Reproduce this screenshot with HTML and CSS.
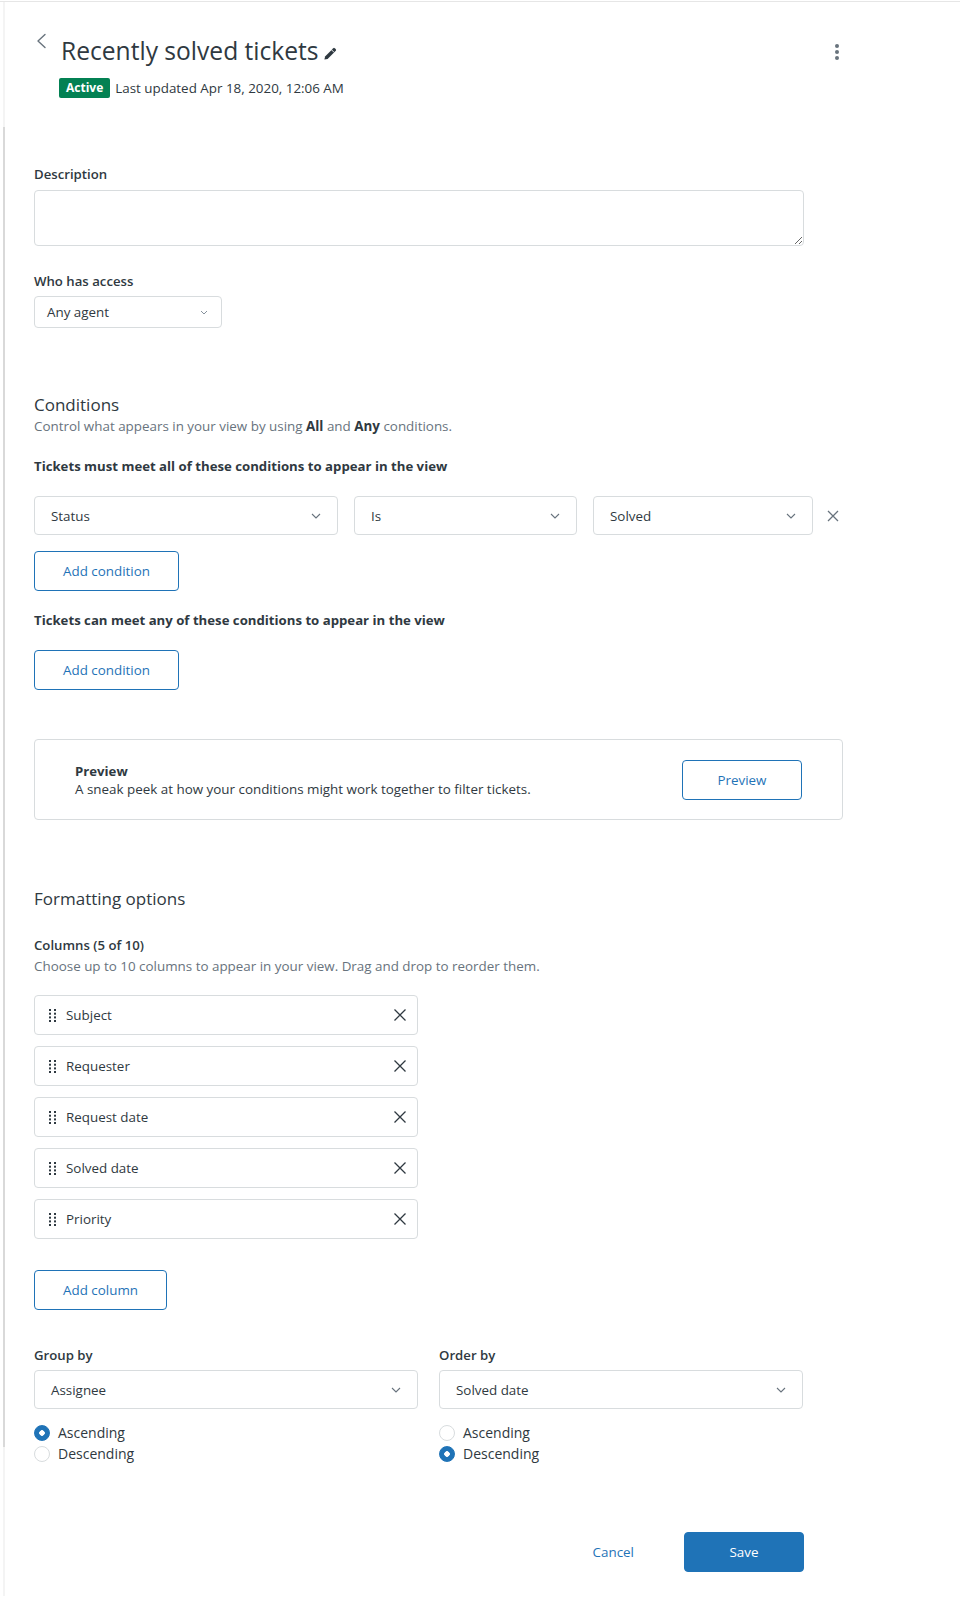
FILE: index.html
```html
<!DOCTYPE html>
<html lang="en">
<head>
<meta charset="utf-8">
<title>Recently solved tickets</title>
<link rel="stylesheet" href="styles.css">
</head>
<body>
<div class="app">
  <div class="rail"><div class="rail-line"></div></div>
  <main class="main">
    <header class="head">
      <button class="back" type="button" aria-label="Back">
        <svg width="12" height="16" viewBox="0 0 12 16"><path d="M9 1.5 2 8l7 6.5" fill="none" stroke="#68737d" stroke-width="1.4" stroke-linecap="round" stroke-linejoin="round"/></svg>
      </button>
      <div class="head-text">
        <h1 class="title">Recently solved tickets<svg class="pencil" width="14" height="14" viewBox="0 0 14 14"><path d="M10.3 1.2a1 1 0 0 1 1.4 0l1.1 1.1a1 1 0 0 1 0 1.4L4.6 11.9 1.4 12.6l.7-3.2z" fill="#2f3941"/><path d="M8.6 2.9l2.5 2.5" stroke="#fff" stroke-width="0.9"/></svg></h1>
        <div class="meta"><span class="badge">Active</span><span class="updated">Last updated Apr 18, 2020, 12:06 AM</span></div>
      </div>
      <button class="kebab" type="button" aria-label="More options">
        <svg width="6" height="18" viewBox="0 0 6 18"><circle cx="3" cy="3" r="2" fill="#68737d"/><circle cx="3" cy="9" r="2" fill="#68737d"/><circle cx="3" cy="15" r="2" fill="#68737d"/></svg>
      </button>
    </header>

    <form class="form">
      <label class="label label--desc" for="desc">Description</label>
      <textarea id="desc" class="textarea"></textarea>

      <label class="label label--access">Who has access</label>
      <div class="select select--sm"><span>Any agent</span>
        <svg width="8" height="5" viewBox="0 0 8 5"><path d="M1 1l3 3 3-3" fill="none" stroke="#87929d" stroke-width="1"/></svg>
      </div>

      <h2 class="section-title section-title--conditions">Conditions</h2>
      <p class="hint">Control what appears in your view by using <b>All</b> and <b>Any</b> conditions.</p>

      <h3 class="group-title group-title--all">Tickets must meet all of these conditions to appear in the view</h3>
      <div class="cond-row">
        <div class="select select--status"><span>Status</span><svg width="10" height="6" viewBox="0 0 10 6"><path d="M1 1l4 4 4-4" fill="none" stroke="#68737d" stroke-width="1.1"/></svg></div>
        <div class="select select--op"><span>Is</span><svg width="10" height="6" viewBox="0 0 10 6"><path d="M1 1l4 4 4-4" fill="none" stroke="#68737d" stroke-width="1.1"/></svg></div>
        <div class="select select--val"><span>Solved</span><svg width="10" height="6" viewBox="0 0 10 6"><path d="M1 1l4 4 4-4" fill="none" stroke="#68737d" stroke-width="1.1"/></svg></div>
        <button class="icon-btn" type="button" aria-label="Remove condition"><svg width="12" height="12" viewBox="0 0 12 12"><path d="M1 1l10 10M11 1 1 11" stroke="#68737d" stroke-width="1.3"/></svg></button>
      </div>
      <button class="btn btn--outline btn--cond1" type="button">Add condition</button>

      <h3 class="group-title group-title--any">Tickets can meet any of these conditions to appear in the view</h3>
      <button class="btn btn--outline btn--cond2" type="button">Add condition</button>

      <div class="preview">
        <div class="preview-text">
          <div class="preview-title">Preview</div>
          <div class="preview-desc">A sneak peek at how your conditions might work together to filter tickets.</div>
        </div>
        <button class="btn btn--outline" type="button">Preview</button>
      </div>

      <h2 class="section-title section-title--format">Formatting options</h2>
      <div class="label label--cols">Columns (5 of 10)</div>
      <p class="hint hint--cols">Choose up to 10 columns to appear in your view. Drag and drop to reorder them.</p>

      <ul class="col-list">
        <li class="col-item"><svg class="grip" width="7" height="13" viewBox="0 0 7 13"><g fill="#2f3941"><rect x="0" y="0" width="2" height="2"/><rect x="5" y="0" width="2" height="2"/><rect x="0" y="3.7" width="2" height="2"/><rect x="5" y="3.7" width="2" height="2"/><rect x="0" y="7.4" width="2" height="2"/><rect x="5" y="7.4" width="2" height="2"/><rect x="0" y="11" width="2" height="2"/><rect x="5" y="11" width="2" height="2"/></g></svg><span class="col-name">Subject</span><svg class="x" width="12" height="12" viewBox="0 0 12 12"><path d="M.5.5l11 11M11.5.5l-11 11" stroke="#2f3941" stroke-width="1.3"/></svg></li>
        <li class="col-item"><svg class="grip" width="7" height="13" viewBox="0 0 7 13"><g fill="#2f3941"><rect x="0" y="0" width="2" height="2"/><rect x="5" y="0" width="2" height="2"/><rect x="0" y="3.7" width="2" height="2"/><rect x="5" y="3.7" width="2" height="2"/><rect x="0" y="7.4" width="2" height="2"/><rect x="5" y="7.4" width="2" height="2"/><rect x="0" y="11" width="2" height="2"/><rect x="5" y="11" width="2" height="2"/></g></svg><span class="col-name">Requester</span><svg class="x" width="12" height="12" viewBox="0 0 12 12"><path d="M.5.5l11 11M11.5.5l-11 11" stroke="#2f3941" stroke-width="1.3"/></svg></li>
        <li class="col-item"><svg class="grip" width="7" height="13" viewBox="0 0 7 13"><g fill="#2f3941"><rect x="0" y="0" width="2" height="2"/><rect x="5" y="0" width="2" height="2"/><rect x="0" y="3.7" width="2" height="2"/><rect x="5" y="3.7" width="2" height="2"/><rect x="0" y="7.4" width="2" height="2"/><rect x="5" y="7.4" width="2" height="2"/><rect x="0" y="11" width="2" height="2"/><rect x="5" y="11" width="2" height="2"/></g></svg><span class="col-name">Request date</span><svg class="x" width="12" height="12" viewBox="0 0 12 12"><path d="M.5.5l11 11M11.5.5l-11 11" stroke="#2f3941" stroke-width="1.3"/></svg></li>
        <li class="col-item"><svg class="grip" width="7" height="13" viewBox="0 0 7 13"><g fill="#2f3941"><rect x="0" y="0" width="2" height="2"/><rect x="5" y="0" width="2" height="2"/><rect x="0" y="3.7" width="2" height="2"/><rect x="5" y="3.7" width="2" height="2"/><rect x="0" y="7.4" width="2" height="2"/><rect x="5" y="7.4" width="2" height="2"/><rect x="0" y="11" width="2" height="2"/><rect x="5" y="11" width="2" height="2"/></g></svg><span class="col-name">Solved date</span><svg class="x" width="12" height="12" viewBox="0 0 12 12"><path d="M.5.5l11 11M11.5.5l-11 11" stroke="#2f3941" stroke-width="1.3"/></svg></li>
        <li class="col-item"><svg class="grip" width="7" height="13" viewBox="0 0 7 13"><g fill="#2f3941"><rect x="0" y="0" width="2" height="2"/><rect x="5" y="0" width="2" height="2"/><rect x="0" y="3.7" width="2" height="2"/><rect x="5" y="3.7" width="2" height="2"/><rect x="0" y="7.4" width="2" height="2"/><rect x="5" y="7.4" width="2" height="2"/><rect x="0" y="11" width="2" height="2"/><rect x="5" y="11" width="2" height="2"/></g></svg><span class="col-name">Priority</span><svg class="x" width="12" height="12" viewBox="0 0 12 12"><path d="M.5.5l11 11M11.5.5l-11 11" stroke="#2f3941" stroke-width="1.3"/></svg></li>
      </ul>
      <button class="btn btn--outline btn--addcol" type="button">Add column</button>

      <div class="sort-grid">
        <div class="sort-col">
          <div class="label label--sort">Group by</div>
          <div class="select select--sort"><span>Assignee</span><svg width="10" height="6" viewBox="0 0 10 6"><path d="M1 1l4 4 4-4" fill="none" stroke="#68737d" stroke-width="1.1"/></svg></div>
          <div class="radios">
            <label class="radio"><input type="radio" name="group" checked><span>Ascending</span></label>
            <label class="radio"><input type="radio" name="group"><span>Descending</span></label>
          </div>
        </div>
        <div class="sort-col">
          <div class="label label--sort">Order by</div>
          <div class="select select--sort"><span>Solved date</span><svg width="10" height="6" viewBox="0 0 10 6"><path d="M1 1l4 4 4-4" fill="none" stroke="#68737d" stroke-width="1.1"/></svg></div>
          <div class="radios">
            <label class="radio"><input type="radio" name="order"><span>Ascending</span></label>
            <label class="radio"><input type="radio" name="order" checked><span>Descending</span></label>
          </div>
        </div>
      </div>

      <div class="footer">
        <button class="btn btn--link" type="button">Cancel</button>
        <button class="btn btn--primary" type="button">Save</button>
      </div>
    </form>
  </main>
</div>
</body>
</html>
```

FILE: styles.css
```css
* { box-sizing: border-box; }

html, body {
  margin: 0;
  padding: 0;
  background: #fff;
}

body {
  font-family: "Open Sans", "Noto Sans", sans-serif;
  font-size: 13.4px;
  line-height: 20px;
  color: #2f3941;
}

.app {
  display: flex;
  margin-top: 1px;
  border-top: 1px solid #e6e6e6;
  min-height: 1595px;
}

.rail {
  width: 2px;
  margin-left: 3px;
  background: #f4f4f4;
  display: flex;
  flex-direction: column;
}

.rail-line {
  margin-top: 125px;
  height: 1320px;
  background: #d9d9d9;
}

.main {
  width: 838px;
  padding-left: 29px;
}

/* Header */
.head {
  display: flex;
  align-items: flex-start;
  padding-top: 32px;
  padding-left: 2px;
}

.back {
  border: 0;
  background: none;
  padding: 0;
  width: 25px;
  height: 16px;
  margin-top: -1px;
  display: flex;
  cursor: pointer;
}

.head-text {
  flex: 1;
  margin-top: 1px;
}

.title {
  margin: 0;
  font-size: 24.6px;
  line-height: 32px;
  font-weight: 400;
  color: #2f3941;
}

.pencil {
  margin-left: 4px;
  vertical-align: -1px;
}

.meta {
  display: flex;
  align-items: center;
  margin-top: 11px;
  margin-left: -2px;
  height: 20px;
}

.badge {
  background: #038153;
  color: #fff;
  font-size: 12px;
  font-weight: 700;
  line-height: 20px;
  height: 20px;
  padding: 0 7px;
  border-radius: 2px;
}

.updated {
  margin-left: 5px;
  color: #2f3941;
}

.kebab {
  border: 0;
  background: none;
  padding: 0;
  width: 6px;
  margin-top: 9px;
  margin-right: 3px;
  display: flex;
}

/* Form */
.form {
  display: flex;
  flex-direction: column;
  align-items: flex-start;
  margin-top: 66px;
}

.label {
  display: block;
  font-size: 13.2px;
  font-weight: 600;
  line-height: 20px;
  color: #2f3941;
}

.textarea {
  margin-top: 6px;
  width: 770px;
  height: 56px;
  border: 1px solid #d8dcde;
  border-radius: 4px;
  font: inherit;
  resize: vertical;
}

.label--access { margin-top: 25px; }

.select {
  display: flex;
  align-items: center;
  justify-content: space-between;
  border: 1px solid #d8dcde;
  border-radius: 4px;
  background: #fff;
  height: 39px;
  padding: 0 16px;
  color: #2f3941;
}

.select--sm {
  margin-top: 5px;
  width: 188px;
  height: 32px;
  padding: 0 13px 0 12px;
}

.section-title {
  margin: 0;
  font-size: 17px;
  font-weight: 400;
  color: #2f3941;
}

.section-title--conditions {
  margin-top: 66px;
  line-height: 22px;
}

.hint {
  margin: 0;
  color: #68737d;
}

.hint b { color: #2f3941; font-weight: 700; }

.group-title {
  margin: 0;
  font-size: 13.2px;
  line-height: 20px;
  font-weight: 700;
}

.group-title--all { margin-top: 20px; }
.group-title--any { margin-top: 19px; }

.cond-row {
  display: flex;
  align-items: center;
  margin-top: 20px;
  gap: 16px;
}

.select--status { width: 304px; }
.select--op { width: 223px; }
.select--val { width: 220px; }

.icon-btn {
  border: 0;
  background: none;
  padding: 0;
  margin-left: -2px;
  display: flex;
}

.btn {
  font: inherit;
  height: 40px;
  border-radius: 4px;
  padding: 0 28px;
  min-width: 120px;
  cursor: pointer;
}

.btn--outline {
  background: #fff;
  border: 1px solid #1f73b7;
  color: #1f73b7;
}

.btn--cond1 { margin-top: 16px; }
.btn--cond2 { margin-top: 20px; }

.preview {
  margin-top: 49px;
  width: 809px;
  height: 81px;
  border: 1px solid #d8dcde;
  border-radius: 4px;
  display: flex;
  align-items: center;
  justify-content: space-between;
  padding: 0 40px;
}

.preview-text { line-height: 18px; }
.preview-title { font-weight: 700; font-size: 13.2px; }

.section-title--format {
  margin-top: 67px;
  line-height: 24px;
}

.label--cols { margin-top: 24px; }

.hint--cols { margin-top: 1px; }

.col-list {
  list-style: none;
  margin: 19px 0 0;
  padding: 0;
  display: flex;
  flex-direction: column;
  gap: 11px;
}

.col-item {
  width: 384px;
  height: 40px;
  border: 1px solid #d8dcde;
  border-radius: 4px;
  display: flex;
  align-items: center;
  padding: 0 11px 0 14px;
}

.grip { flex: none; }

.col-name {
  flex: 1;
  margin-left: 10px;
}

.x { flex: none; }

.btn--addcol { margin-top: 31px; }

.sort-grid {
  margin-top: 35px;
  display: grid;
  grid-template-columns: 384px 364px;
  column-gap: 21px;
}

.select--sort {
  margin-top: 5px;
}

.radios {
  margin-top: 13px;
  display: flex;
  flex-direction: column;
}

.radio {
  display: flex;
  align-items: center;
  height: 21px;
  gap: 8px;
  font-size: 14px;
  font-weight: 500;
}

.radio input {
  appearance: none;
  -webkit-appearance: none;
  margin: 0;
  width: 16px;
  height: 16px;
  border-radius: 50%;
  border: 1px solid #d8dcde;
  background: #fff;
}

.radio input:checked {
  border-color: #1f73b7;
  background: radial-gradient(circle, #fff 0 2.5px, #1f73b7 3px);
}

.footer {
  margin-top: 68px;
  width: 770px;
  display: flex;
  justify-content: flex-end;
  gap: 30px;
}

.btn--link {
  background: none;
  border: 0;
  color: #1f73b7;
  min-width: 0;
  padding: 0 20px;
}

.btn--primary {
  background: #1f73b7;
  border: 1px solid #1f73b7;
  color: #fff;
  width: 120px;
  padding: 0;
}
```
